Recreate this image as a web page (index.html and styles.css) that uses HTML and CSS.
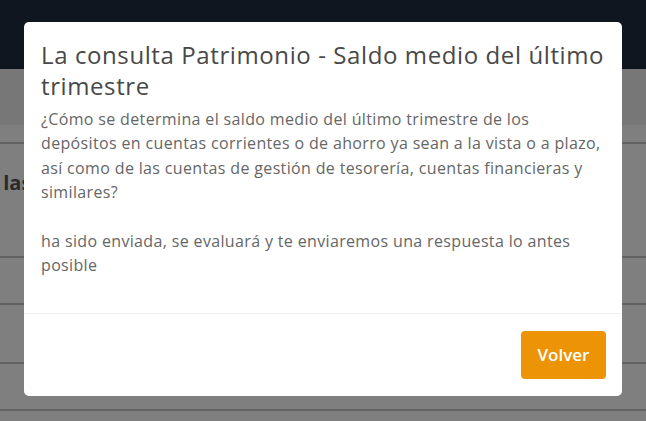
FILE: index.html
```html
<!DOCTYPE html>
<html>
<head>
  <title>Consultas</title>
  <meta charset="utf-8" />
  <link rel="stylesheet" href="styles.css">
</head>
<body>
  <div class="page">
    <div class="topbar"></div>
    <div class="subbar"></div>
    <div class="tabs"></div>
    <div class="section">
      <h2 class="section-title">Detalle de las</h2>
    </div>
    <div class="row row-short"></div>
    <div class="row row-mid"></div>
    <div class="row row-short"></div>
  </div>

  <div class="backdrop"></div>

  <div class="modal">
    <div class="modal-header">
      <h4 class="modal-title">La consulta Patrimonio - Saldo medio del último trimestre</h4>
    </div>
    <div class="modal-body">
      ¿Cómo se determina el saldo medio del último trimestre de los depósitos en cuentas corrientes o de ahorro ya sean a la vista o a plazo, así como de las cuentas de gestión de tesorería, cuentas financieras y similares?<br /><br />
      ha sido enviada, se evaluará y te enviaremos una respuesta lo antes posible
    </div>
    <div class="modal-footer">
      <button class="btn-volver">Volver</button>
    </div>
  </div>
</body>
</html>
```

FILE: styles.css
```css
body {
  margin: 0;
  padding: 0;
  font-family: "Open Sans", "Noto Sans", sans-serif;
  background: #fff;
  overflow: hidden;
}

.topbar {
  height: 69px;
  background: #1e2c40;
}

.subbar {
  height: 56px;
  background: #eeeeee;
}

.tabs {
  height: 17px;
  border-bottom: 2px solid #c4c4c4;
}

.section {
  height: 112px;
  border-bottom: 2px solid #c4c4c4;
  display: flex;
  align-items: center;
}

.section-title {
  margin: 0 0 36px -103px;
  font-size: 20px;
  font-weight: 700;
  color: #555;
  white-space: nowrap;
}

.row {
  height: 45px;
  border-bottom: 2px solid #c4c4c4;
}

.row-mid {
  height: 57px;
}

/* overlay + dialog */
.backdrop {
  position: fixed;
  top: 0;
  left: 0;
  right: 0;
  bottom: 0;
  background: rgba(0, 0, 0, 0.5);
}

.modal {
  position: fixed;
  top: 22px;
  left: 24px;
  width: 598px;
  background: #fff;
  border-radius: 5px;
  display: flex;
  flex-direction: column;
}

.modal-header {
  padding: 17px 16px 0 17px;
}

.modal-title {
  margin: 0;
  font-family: "Open Sans", sans-serif;
  font-size: 24px;
  font-weight: 400;
  line-height: 31px;
  letter-spacing: 0.6px;
  color: #484848;
}

.modal-body {
  padding: 6px 14px 35px 17px;
  font-size: 16px;
  line-height: 24.4px;
  letter-spacing: 0.35px;
  color: #666;
}

.modal-footer {
  border-top: 1px solid #eceeef;
  padding: 17px 16px 17px;
  display: flex;
  justify-content: flex-end;
}

.btn-volver {
  width: 85px;
  height: 48px;
  border: none;
  border-radius: 4px;
  background: #ec9406;
  color: #fff;
  font-family: "Open Sans", sans-serif;
  font-size: 17px;
  font-weight: 600;
}
```
